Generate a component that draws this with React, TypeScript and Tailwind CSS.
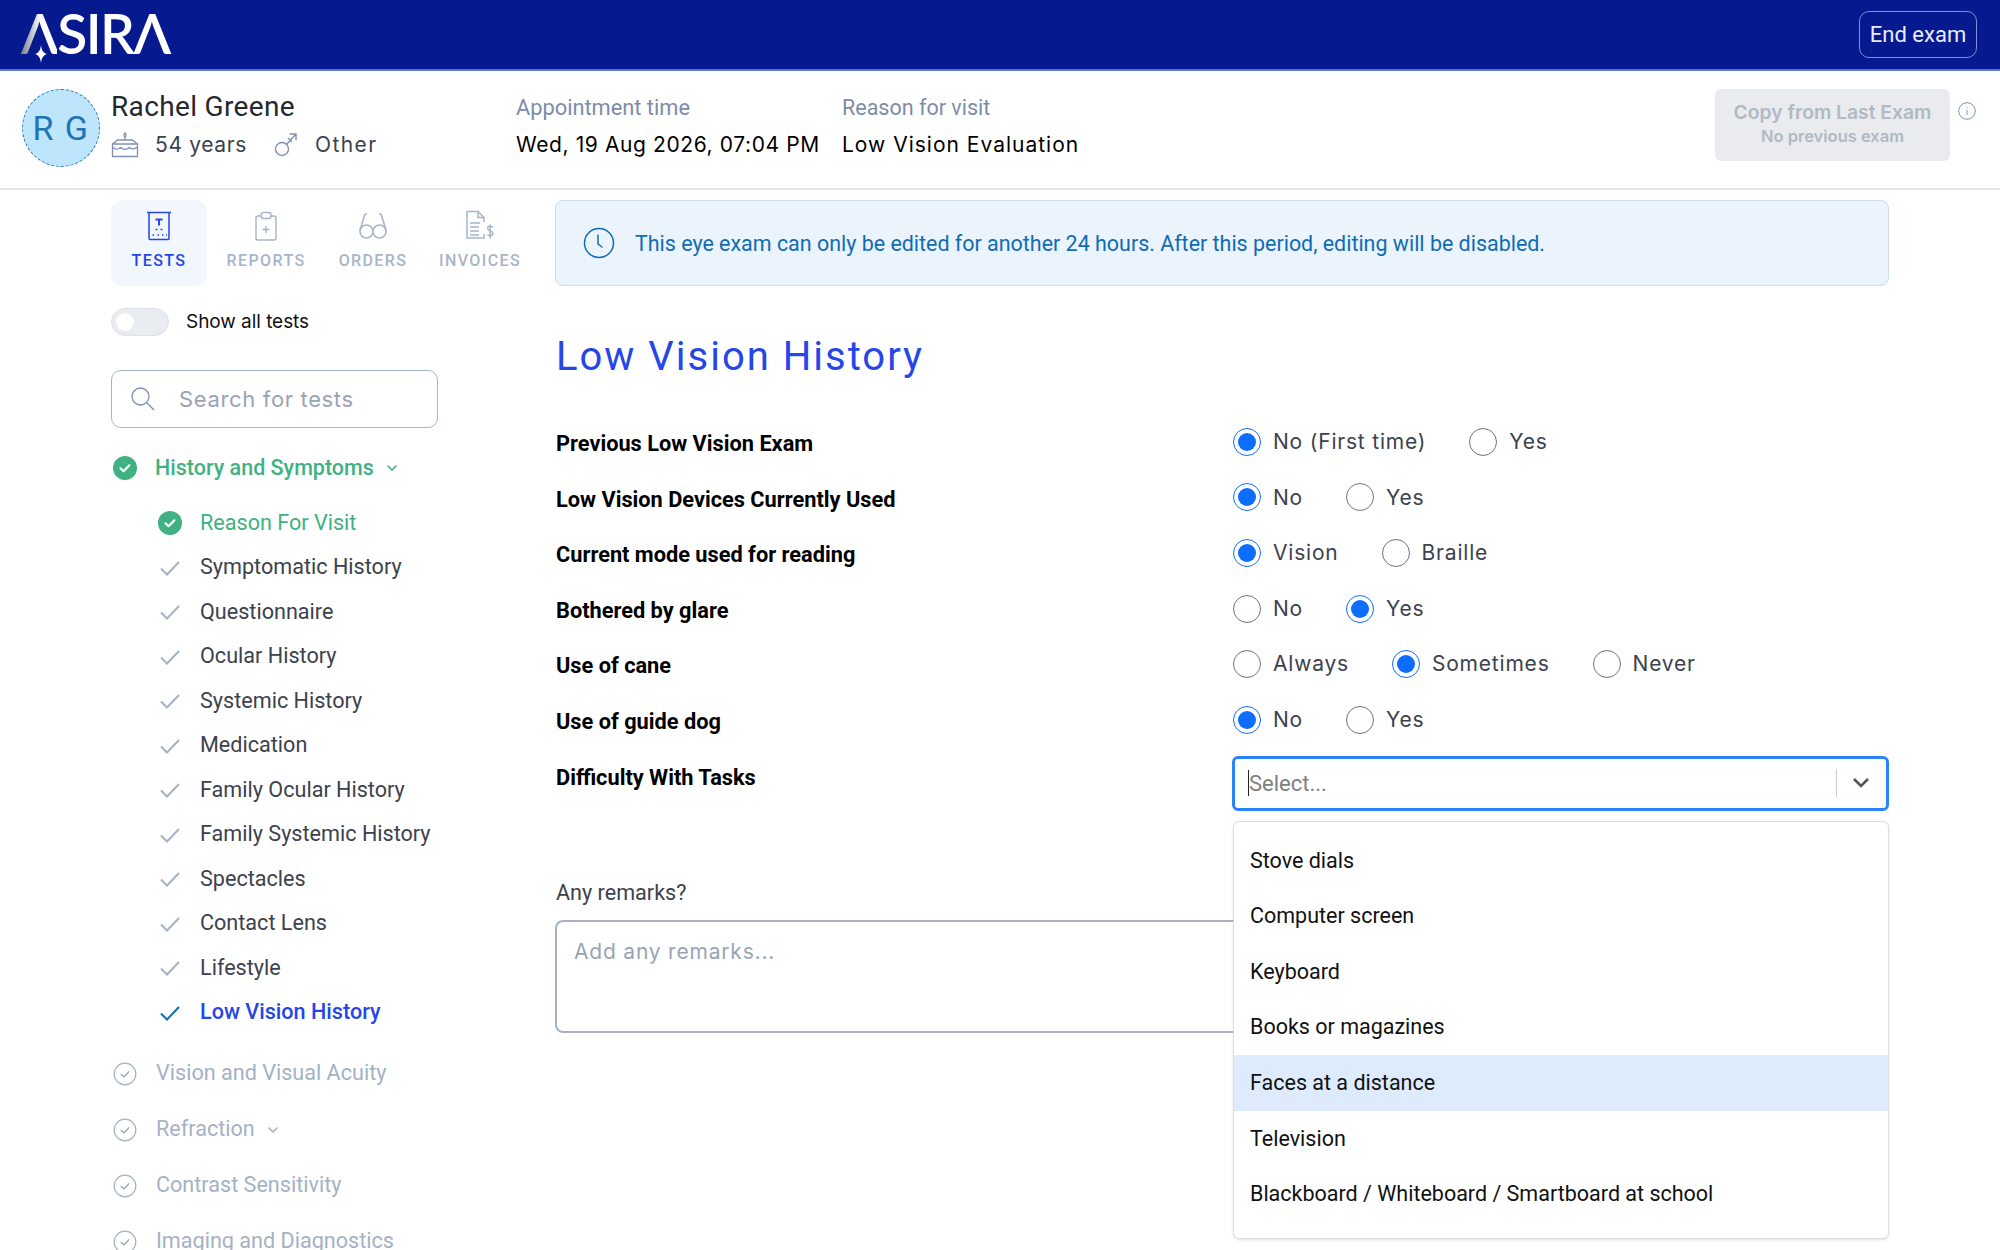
import React from "react";

const BARLOW = "font-['Roboto',sans-serif]";
const WORK = "font-['Inter',sans-serif]";

const SUB_ITEMS = [
  "Symptomatic History",
  "Questionnaire",
  "Ocular History",
  "Systemic History",
  "Medication",
  "Family Ocular History",
  "Family Systemic History",
  "Spectacles",
  "Contact Lens",
  "Lifestyle",
];

const QUESTIONS = [
  { label: "Previous Low Vision Exam", options: ["No (First time)", "Yes"], selected: 0 },
  { label: "Low Vision Devices Currently Used", options: ["No", "Yes"], selected: 0 },
  { label: "Current mode used for reading", options: ["Vision", "Braille"], selected: 0 },
  { label: "Bothered by glare", options: ["No", "Yes"], selected: 1 },
  { label: "Use of cane", options: ["Always", "Sometimes", "Never"], selected: 1 },
  { label: "Use of guide dog", options: ["No", "Yes"], selected: 0 },
];

const TASKS = [
  "Stove dials",
  "Computer screen",
  "Keyboard",
  "Books or magazines",
  "Faces at a distance",
  "Television",
  "Blackboard / Whiteboard / Smartboard at school",
];

function CheckLine({ className }: { className: string }) {
  return (
    <svg width="24" height="18" viewBox="0 0 24 18" fill="none" className={className}>
      <path d="M3 9.5l6 6L21 3" stroke="currentColor" strokeWidth="2" />
    </svg>
  );
}

function DoneCircle() {
  return (
    <svg width="24" height="24" viewBox="0 0 24 24" className="shrink-0">
      <circle cx="12" cy="12" r="12" fill="#3fb183" />
      <path d="M7.5 12.3l3 2.9 5.8-5.8" fill="none" stroke="white" strokeWidth="2.2" strokeLinecap="round" strokeLinejoin="round" />
    </svg>
  );
}

function TodoCircle() {
  return (
    <svg width="24" height="24" viewBox="0 0 24 24" fill="none" className="shrink-0 text-[#a3b2c4]">
      <circle cx="12" cy="12" r="10.8" stroke="currentColor" strokeWidth="1.2" />
      <path d="M7.8 12l3 3 5.4-5.6" stroke="#8d9cb0" strokeWidth="1.2" />
    </svg>
  );
}

function Chevron({ className }: { className: string }) {
  return (
    <svg width="12" height="8" viewBox="0 0 12 8" fill="none" className={className}>
      <path d="M2 2l4 4 4-4" stroke="currentColor" strokeWidth="1.6" strokeLinecap="round" strokeLinejoin="round" />
    </svg>
  );
}

function TestsIcon() {
  return (
    <svg width="26" height="30" viewBox="0 0 26 30" fill="none" stroke="#2546e8" strokeWidth="1.5">
      <path d="M1 1.5h24" />
      <path d="M3 1.5v26a1 1 0 001 1h18a1 1 0 001-1v-26" />
      <path d="M9.5 8.5h7M13 8.5v6" strokeWidth="2" />
      <path d="M9.5 18.5h2M14.5 18.5h2M6.5 24h1.5M11.5 24h1.5M16 24h1.5M20 24h1" strokeWidth="1.4" />
    </svg>
  );
}

function ReportsIcon() {
  return (
    <svg width="24" height="30" viewBox="0 0 24 30" fill="none" stroke="#a7b4cc" strokeWidth="1.4">
      <path d="M7 5H4a2 2 0 00-2 2v20a2 2 0 002 2h16a2 2 0 002-2V7a2 2 0 00-2-2h-3" />
      <rect x="7" y="1.5" width="10" height="6" rx="2.5" />
      <path d="M12 15v7M8.5 18.5h7" />
    </svg>
  );
}

function OrdersIcon() {
  return (
    <svg width="30" height="28" viewBox="0 0 30 28" fill="none" stroke="#a7b4cc" strokeWidth="1.6">
      <path d="M7 2L2 18M23 2l5 16" />
      <path d="M7 2h2M23 2h-2" />
      <path d="M2 18.5a6.5 6.5 0 0013 0 6.5 6.5 0 00-13 0zM15 18.5a6.5 6.5 0 0013 0 6.5 6.5 0 00-13 0z" transform="translate(0 1)" />
    </svg>
  );
}

function InvoicesIcon() {
  return (
    <svg width="30" height="32" viewBox="0 0 30 32" fill="none" stroke="#a7b4cc" strokeWidth="1.5">
      <path d="M19 24v4H2V1.5h11l6 6V12" />
      <path d="M13 1.5v6h6" />
      <path d="M5 13h10M5 17h9M5 21h9M5 25h9" />
      <path d="M28 17.5c-.5-1.5-5.5-2-5.5 1 0 3 5.5 2 5.5 5 0 3-5 2.5-5.5 1M25.2 14.5v14" />
    </svg>
  );
}

function Tab({ label, active, children }: { label: string; active?: boolean; children: React.ReactNode }) {
  return (
    <div className={`w-[96px] h-[86px] mr-[11px] rounded-xl flex flex-col items-center ${active ? "bg-[#f2f7fe]" : ""}`}>
      <div className="h-[32px] mt-[10px] flex items-center justify-center">{children}</div>
      <span className={`mt-[9px] text-[16px] leading-[20px] tracking-[1.4px] font-medium ${BARLOW} ${active ? "text-[#2546e8]" : "text-[#a9b5c9]"}`}>
        {label}
      </span>
    </div>
  );
}

function Radio({ label, on }: { label: string; on: boolean }) {
  return (
    <div className="flex items-center mr-[43px]">
      <span className={`w-[28px] h-[28px] rounded-full border-[1.5px] flex items-center justify-center bg-white ${on ? "border-[#0d6efd]" : "border-[#6c7480]"}`}>
        {on && <span className="w-[18px] h-[18px] rounded-full bg-[#0d6efd]" />}
      </span>
      <span className={`ml-[12px] text-[21px] tracking-[0.8px] text-[#3b424d] ${WORK}`}>{label}</span>
    </div>
  );
}

function Sidebar() {
  return (
    <aside className="w-[555px] pl-[111px] shrink-0">
      <div className="flex">
        <Tab label="TESTS" active><TestsIcon /></Tab>
        <Tab label="REPORTS"><ReportsIcon /></Tab>
        <Tab label="ORDERS"><OrdersIcon /></Tab>
        <Tab label="INVOICES"><InvoicesIcon /></Tab>
      </div>
      <div className="flex items-center mt-[22px] h-[28px]">
        <div className="w-[58px] h-[28px] rounded-full bg-[#e9ecf0] border border-[#dde2e8] flex items-center pl-[4px]">
          <span className="w-[18px] h-[18px] rounded-full bg-white" />
        </div>
        <span className={`ml-[17px] text-[19px] text-[#111] ${WORK} tracking-[-0.05px]`}>Show all tests</span>
      </div>
      <div className="w-[327px] h-[58px] mt-[34px] rounded-[10px] border-[1.5px] border-[#a6b4ca] flex items-center pl-[18px]">
        <svg width="26" height="26" viewBox="0 0 26 26" fill="none" stroke="#7a8db0" strokeWidth="1.3">
          <circle cx="10.5" cy="10.5" r="8.5" />
          <path d="M17 17l7 7" />
        </svg>
        <span className={`ml-[23px] text-[22px] tracking-[0.65px] text-[#9aa3b5] ${WORK}`}>Search for tests</span>
      </div>
      <div className="mt-[25px] flex items-center h-[30px] pl-[2px]">
        <DoneCircle />
        <span className={`ml-[18px] text-[21.5px] font-medium text-[#3fb183] ${BARLOW}`}>History and Symptoms</span>
        <Chevron className="ml-[12px] text-[#3fb183]" />
      </div>
      <div className="mt-[25px] pl-[47px] flex flex-col">
        <div className="h-[30px] flex items-center">
          <DoneCircle />
          <span className={`ml-[18px] text-[21.6px] text-[#3fb183] ${BARLOW}`}>Reason For Visit</span>
        </div>
        {SUB_ITEMS.map((item) => (
          <div key={item} className="h-[30px] mt-[14.5px] flex items-center">
            <CheckLine className="text-[#a3b2c4] shrink-0" />
            <span className={`ml-[18px] text-[21.6px] text-[#3b424d] ${BARLOW}`}>{item}</span>
          </div>
        ))}
        <div className="h-[30px] mt-[14.5px] flex items-center">
          <CheckLine className="text-[#0f6cb5] shrink-0" />
          <span className={`ml-[18px] text-[21.6px] font-medium text-[#2546e8] ${BARLOW}`}>Low Vision History</span>
        </div>
      </div>
      <div className="mt-[31px] flex flex-col gap-[26px] pl-[2px]">
        {["Vision and Visual Acuity", "Refraction", "Contrast Sensitivity", "Imaging and Diagnostics"].map((s) => (
          <div key={s} className="h-[30px] flex items-center">
            <TodoCircle />
            <span className={`ml-[19px] text-[21.6px] text-[#a3b2c4] ${BARLOW}`}>{s}</span>
            {s === "Refraction" && <Chevron className="ml-[12px] text-[#a3b2c4]" />}
          </div>
        ))}
      </div>
    </aside>
  );
}

function ExamForm() {
  return (
    <main className="w-[1334px] relative">
      <div className="h-[86px] rounded-[8px] border border-[#cfdcea] bg-[#ebf3fd] flex items-center pl-[27px]">
        <svg width="32" height="32" viewBox="0 0 32 32" fill="none" stroke="#0f6cb5" strokeWidth="1.5">
          <circle cx="16" cy="16" r="14.5" />
          <path d="M15 8v9l4 3" strokeLinecap="round" strokeLinejoin="round" />
        </svg>
        <span className={`ml-[20px] pt-[2px] text-[21.45px] text-[#0f6cb5] ${BARLOW}`}>
          This eye exam can only be edited for another 24 hours. After this period, editing will be disabled.
        </span>
      </div>
      <h1 className={`mt-[46px] pl-[1px] text-[40px] leading-[50px] tracking-[2px] text-[#2546e8] ${BARLOW}`}>Low Vision History</h1>
      <div className="mt-[44px] flex flex-col">
        {QUESTIONS.map((q) => (
          <div key={q.label} className="h-[55.6px] flex items-start">
            <span className={`w-[677px] shrink-0 pl-[1px] pt-[4px] text-[21.75px] leading-[28px] font-bold text-black ${BARLOW}`}>{q.label}</span>
            <div className="flex pl-[1px]">
              {q.options.map((o, i) => (
                <Radio key={o} label={o} on={i === q.selected} />
              ))}
            </div>
          </div>
        ))}
        <div className="flex items-start">
          <span className={`w-[677px] shrink-0 pl-[1px] pt-[4px] text-[21.75px] leading-[28px] font-bold text-black ${BARLOW}`}>Difficulty With Tasks</span>
          <div className="w-[657px] h-[55px] -mt-[4px] rounded-[6px] border-[3px] border-[#2b84ff] flex items-center pl-[13px] pr-[15px] bg-white">
            <span className="w-[1px] h-[26px] bg-[#222]" />
            <span className={`flex-1 text-[22px] text-[#808080] ${BARLOW}`}>Select...</span>
            <span className="w-[1px] h-[28px] bg-[#ccc]" />
            <svg width="20" height="14" viewBox="0 0 20 14" fill="none" className="ml-[14px]">
              <path d="M3 3l7 7 7-7" stroke="#555" strokeWidth="2.6" />
            </svg>
          </div>
        </div>
      </div>
      <div className={`mt-[68px] pl-[1px] text-[21.6px] leading-[28px] text-[#3b424d] ${BARLOW}`}>Any remarks?</div>
      <div className="mt-[13px] w-[1000px] h-[113px] rounded-[8px] border-[2.5px] border-[#a6b3c2] pl-[17px] pt-[14px]">
        <span className={`text-[21px] tracking-[0.8px] text-[#9aa3b5] ${WORK}`}>Add any remarks...</span>
      </div>
      <div className="absolute left-[678px] top-[621px] w-[656px] h-[418px] rounded-[6px] border border-[#dedede] bg-white shadow-sm pt-[11px]">
        {TASKS.map((t) => (
          <div key={t} className={`h-[55.6px] flex items-center pl-[16px] text-[21.5px] text-[#111] ${BARLOW} ${t === "Faces at a distance" ? "bg-[#deebfd]" : ""}`}>
            {t}
          </div>
        ))}
      </div>
    </main>
  );
}

export default function App() {
  return (
    <div className="w-[2000px] h-[1250px] overflow-hidden bg-white">
      <header className="h-[71px] bg-[#07198f] border-b-2 border-[#5f74c4] flex items-center justify-between pl-[21px] pr-[23px]">
        <div className="relative h-[50px] flex items-center -mt-[3px]">
          <span className="font-['Lato',sans-serif] text-[55px] leading-[50px] font-semibold tracking-[-1.5px] text-white">
            <span className="bg-gradient-to-r from-[#77808e] to-white to-55% bg-clip-text text-transparent">Λ</span>SIRΛ
          </span>
          <svg width="14" height="18" viewBox="0 0 14 18" className="absolute left-[13px] bottom-[-5px]">
            <path d="M7 0c.6 5 1.8 7.500 6 9-4 1.500-5.400 4-6 9-.6-5-2-7.500-6-9 4.200-1.500 5.400-4 6-9z" fill="white" />
          </svg>
        </div>
        <div className={`w-[118px] h-[47px] rounded-[10px] border border-[#7f8fd0] flex items-center justify-center text-[22px] text-[#e8ecfb] ${BARLOW}`}>
          End exam
        </div>
      </header>

      <section className="h-[119px] border-b-2 border-[#e2e5ea] flex items-start relative">
        <div className="ml-[22px] mt-[18px] w-[78px] h-[78px] rounded-full bg-[#bde5fb] border border-dashed border-[#1f73b7] flex items-center justify-center">
          <span className={`text-[34px] tracking-[1.5px] text-[#1f73b7] ${BARLOW}`}>R G</span>
        </div>
        <div className="ml-[11px] mt-[18px]">
          <div className={`text-[28px] leading-[36px] tracking-[0.35px] text-[#24292f] ${BARLOW}`}>Rachel Greene</div>
          <div className="flex items-center mt-[5px] h-[30px]">
            <svg width="28" height="26" viewBox="0 0 28 26" fill="none" stroke="#8391b0" strokeWidth="1.3">
              <path d="M1.500 12h25v12.500h-25zM1.500 15c3 3 5 3 8 .5 3 2.500 6 2.500 9 0 3 2.500 5 2 8-.5M1.500 12l5-4h15l5 4M14 8V5" />
              <path d="M14 1c1.500 1.500 1.500 3 0 4-1.500-1-1.500-2.500 0-4z" />
            </svg>
            <span className={`ml-[16px] text-[21px] tracking-[0.65px] text-[#3b424d] ${WORK}`}>54 years</span>
            <svg width="24" height="26" viewBox="0 0 24 26" fill="none" stroke="#8391b0" strokeWidth="1.4" className="ml-[27px]">
              <circle cx="8" cy="17" r="6.500" />
              <path d="M12.500 12.500L22 2M15.500 2H22v6.500M14 6l4 4" />
            </svg>
            <span className={`ml-[17px] text-[21px] tracking-[1.4px] text-[#3b424d] ${WORK}`}>Other</span>
          </div>
        </div>
        <div className="absolute left-[516px] top-[22px]">
          <div className={`text-[21.8px] leading-[30px] text-[#7e8ca8] ${BARLOW}`}>Appointment time</div>
          <div className={`mt-[7px] text-[21px] leading-[30px] tracking-[0.6px] text-black ${WORK}`}>Wed, 19 Aug 2026, 07:04 PM</div>
        </div>
        <div className="absolute left-[842px] top-[22px]">
          <div className={`text-[21.5px] leading-[30px] text-[#7e8ca8] ${BARLOW}`}>Reason for visit</div>
          <div className={`mt-[7px] text-[21px] leading-[30px] tracking-[1px] text-black ${WORK}`}>Low Vision Evaluation</div>
        </div>
        <div className="ml-auto mt-[18px] mr-[8px] w-[235px] h-[72px] pb-[4px] rounded-[6px] bg-[#e9ebef] flex flex-col items-center justify-center font-['Inter',sans-serif] font-semibold text-[#b0b9c4]">
          <span className="text-[19.3px] leading-[26px]">Copy from Last Exam</span>
          <span className="text-[16.5px] leading-[22px]">No previous exam</span>
        </div>
        <svg width="18" height="18" viewBox="0 0 18 18" fill="none" stroke="#8391b0" strokeWidth="1" className="mt-[31px] mr-[24px]">
          <circle cx="9" cy="9" r="8.300" />
          <path d="M9 8v5M9 5.500v1" />
        </svg>
      </section>

      <div className="flex pt-[10px]">
        <Sidebar />
        <ExamForm />
      </div>
    </div>
  );
}
